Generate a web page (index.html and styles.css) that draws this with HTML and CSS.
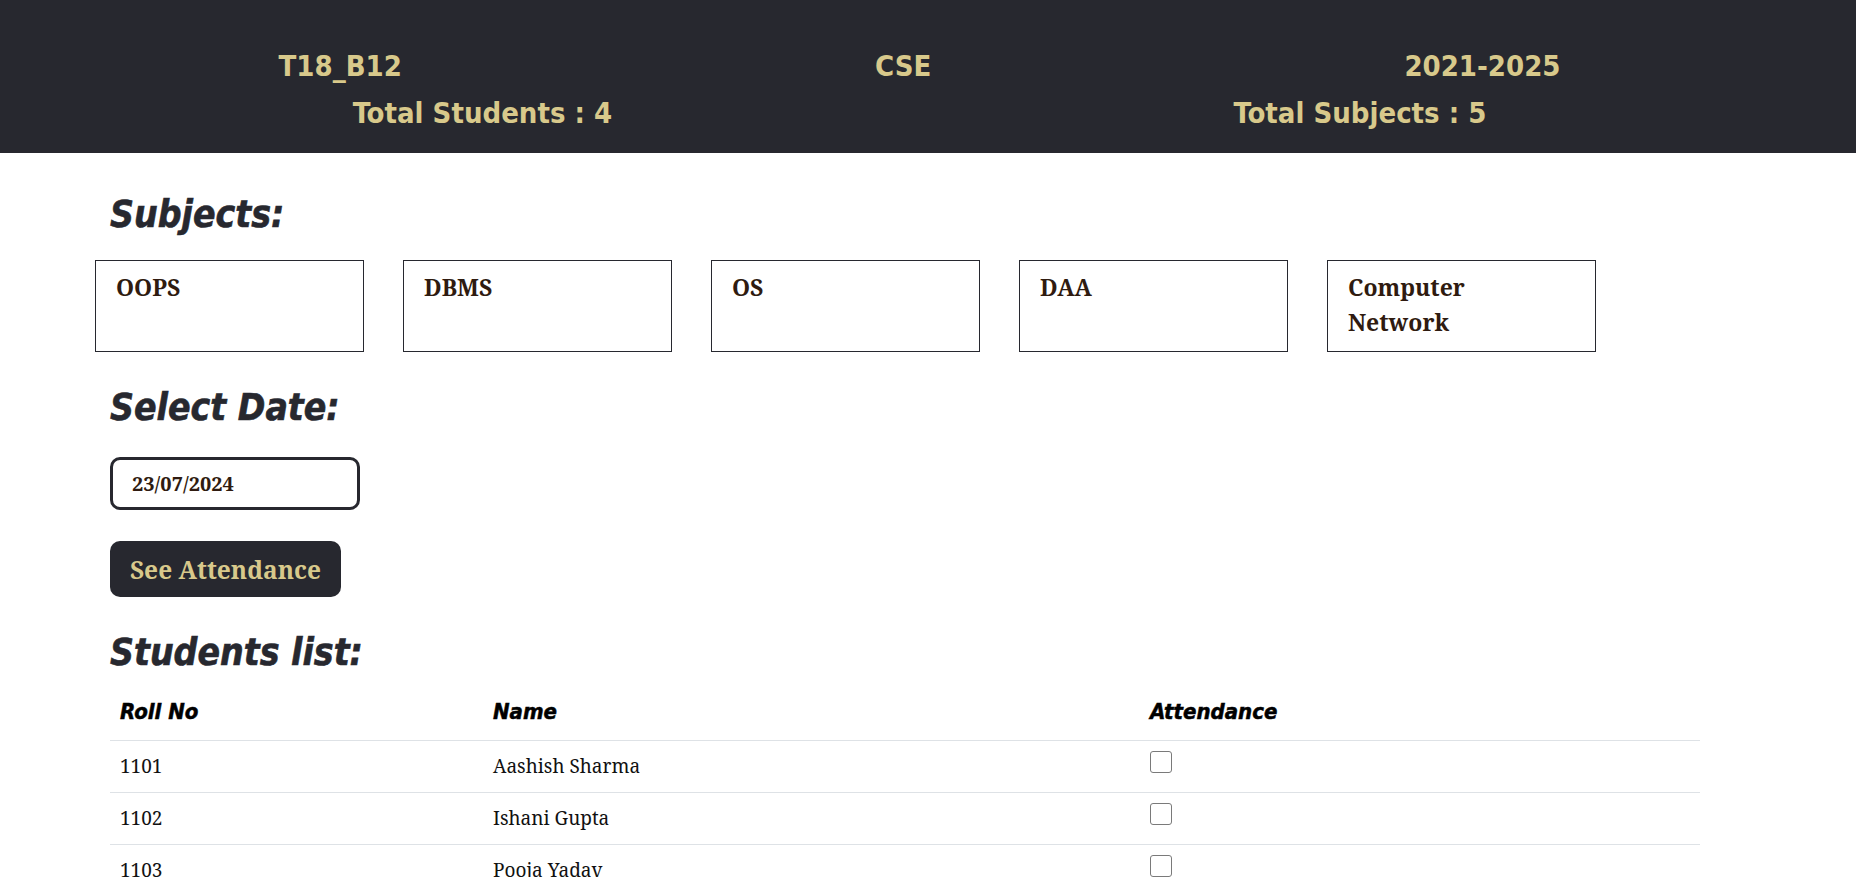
FILE: index.html
```html
<!DOCTYPE html>
<html lang="en">
<head>
<meta charset="utf-8">
<title>Attendance</title>
<link rel="stylesheet" href="styles.css">
</head>
<body>
<header class="batch-header">
  <div class="batch-row">
    <span class="batch-item">T18_B12</span>
    <span class="batch-item">CSE</span>
    <span class="batch-item">2021-2025</span>
  </div>
  <div class="batch-row">
    <span class="batch-item">Total Students : 4</span>
    <span class="batch-item">Total Subjects : 5</span>
  </div>
</header>
<main class="content">
  <h2 class="section-title title-subjects">Subjects:</h2>
  <div class="subject-list">
    <div class="subject-card">OOPS</div>
    <div class="subject-card">DBMS</div>
    <div class="subject-card">OS</div>
    <div class="subject-card">DAA</div>
    <div class="subject-card">Computer Network</div>
  </div>
  <h2 class="section-title title-date">Select Date:</h2>
  <input class="date-input" type="text" value="23/07/2024" readonly>
  <button class="see-btn" type="button">See Attendance</button>
  <h2 class="section-title title-students">Students list:</h2>
  <table class="student-table">
    <colgroup>
      <col class="col-roll">
      <col class="col-name">
      <col class="col-att">
    </colgroup>
    <thead>
      <tr><th>Roll No</th><th>Name</th><th>Attendance</th></tr>
    </thead>
    <tbody>
      <tr><td>1101</td><td>Aashish Sharma</td><td><input class="att-check" type="checkbox"></td></tr>
      <tr><td>1102</td><td>Ishani Gupta</td><td><input class="att-check" type="checkbox"></td></tr>
      <tr><td>1103</td><td>Pooja Yadav</td><td><input class="att-check" type="checkbox"></td></tr>
      <tr><td>1104</td><td>Rahul Verma</td><td><input class="att-check" type="checkbox"></td></tr>
    </tbody>
  </table>
</main>
</body>
</html>
```

FILE: styles.css
```css
html, body {
  margin: 0;
  padding: 0;
  background: #ffffff;
}

body {
  font-family: "Noto Serif", "DejaVu Serif Condensed", "DejaVu Serif", serif;
  color: #111111;
}

.batch-header {
  background: #27282f;
  padding: 43px 59px 16px 42px;
  height: 153px;
  box-sizing: border-box;
}

.batch-row {
  display: flex;
  justify-content: space-around;
  font-family: "Liberation Sans Narrow", "DejaVu Sans Condensed", sans-serif;
  font-weight: 700;
  font-size: 29px;
  line-height: 47px;
  color: #d8c98b;
}

.content {
  padding-left: 110px;
}

.section-title {
  font-family: "Liberation Sans Narrow", "DejaVu Sans Condensed", sans-serif;
  font-weight: 700;
  font-style: italic;
  font-size: 37px;
  line-height: 52px;
  color: #27282f;
  margin: 0;
  -webkit-text-stroke: 0.6px #27282f;
}

.title-subjects { margin-top: 36px; }
.title-date { margin-top: 30px; }
.title-students { margin-top: 30px; }

.subject-list {
  display: flex;
  gap: 39px;
  margin-left: -15px;
  margin-top: 19px;
}

.subject-card {
  box-sizing: border-box;
  width: 269px;
  height: 92px;
  border: 1px solid #27282f;
  padding: 9px 40px 0 20px;
  font-weight: 700;
  font-size: 23px;
  line-height: 35px;
  color: #2f1b10;
}

.date-input {
  display: block;
  box-sizing: border-box;
  width: 250px;
  height: 53px;
  margin-top: 23px;
  border: 3px solid #27282f;
  border-radius: 10px;
  padding: 0 0 0 19px;
  font-family: inherit;
  font-weight: 700;
  font-size: 20px;
  color: #2f1b10;
  background: #ffffff;
  outline: none;
}

.see-btn {
  display: block;
  box-sizing: border-box;
  width: 231px;
  height: 56px;
  margin-top: 31px;
  border: none;
  border-radius: 10px;
  background: #27282f;
  color: #d8c98b;
  font-family: inherit;
  font-weight: 700;
  font-size: 24.5px;
  padding: 0;
}

.student-table {
  margin-top: 7px;
  width: 1590px;
  border-collapse: collapse;
}

.col-roll { width: 373px; }
.col-name { width: 657px; }
.col-att { width: 560px; }

.student-table th {
  text-align: left;
  font-family: "Liberation Sans Narrow", "DejaVu Sans Condensed", sans-serif;
  font-weight: 700;
  font-style: italic;
  font-size: 22px;
  line-height: 32px;
  color: #000000;
  padding: 10px 10px 12px 10px;
  border-bottom: 1px solid #dee2e6;
  -webkit-text-stroke: 0.5px #000000;
}

.student-table td {
  font-size: 19px;
  line-height: 32px;
  padding: 9px 10px 10px 10px;
  border-bottom: 1px solid #dee2e6;
  vertical-align: top;
  color: #111111;
}

.att-check {
  appearance: none;
  -webkit-appearance: none;
  display: block;
  width: 22px;
  height: 22px;
  margin: 1px 0 0 0;
  border: 1px solid #7a7a7a;
  border-radius: 3px;
  background: #ffffff;
  box-sizing: border-box;
}
```
